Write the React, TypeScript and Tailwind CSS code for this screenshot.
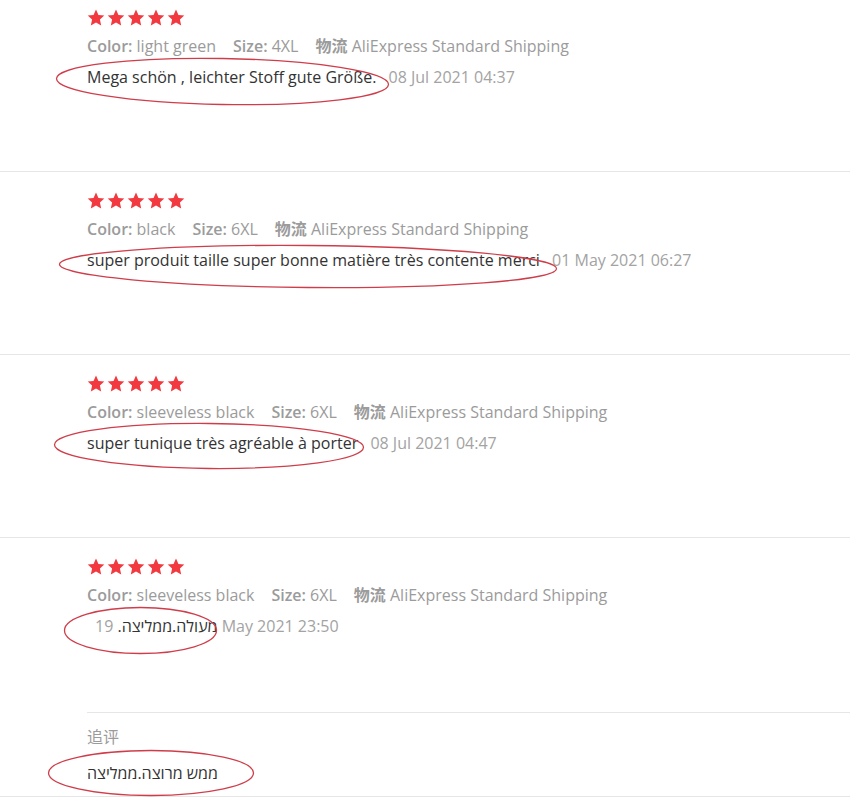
import React from 'react';

type Review = {
  color: string;
  size: string;
  comment: string;
  date: string;
  ring: { left: number; top: number; width: number; height: number; tilt: number };
};

const reviews: Review[] = [
  {
    color: 'light green',
    size: '4XL',
    comment: 'Mega schön , leichter Stoff gute Größe.',
    date: '08 Jul 2021 04:37',
    ring: { left: -32, top: -8, width: 335, height: 49, tilt: 1 },
  },
  {
    color: 'black',
    size: '6XL',
    comment: 'super produit taille super bonne matière très contente merci',
    date: '01 May 2021 06:27',
    ring: { left: -29, top: -4, width: 500, height: 45, tilt: 0.5 },
  },
  {
    color: 'sleeveless black',
    size: '6XL',
    comment: 'super tunique très agréable à porter',
    date: '08 Jul 2021 04:47',
    ring: { left: -34, top: -9, width: 312, height: 48, tilt: 0.5 },
  },
  {
    color: 'sleeveless black',
    size: '6XL',
    comment: 'מעולה.ממליצה.',
    date: '19 May 2021 23:50',
    ring: { left: -24, top: -8, width: 155, height: 49, tilt: 0 },
  },
];

function Stars() {
  return (
    <div className="flex h-[18px] items-center gap-[2px]">
      {[0, 1, 2, 3, 4].map((i) => (
        <svg key={i} width="18" height="17" viewBox="0 0 24 23">
          <path
            d="M12 0.8l3.3 7.3 7.9.8-5.9 5.4 1.7 7.9L12 18.1l-7 4.1 1.7-7.9L.8 8.9l7.9-.8z"
            fill="#f2393f"
          />
        </svg>
      ))}
    </div>
  );
}

// hand-drawn red circle marking the comment
function Ring({ left, top, width, height, tilt }: Review['ring']) {
  return (
    <svg
      className="pointer-events-none absolute"
      style={{ left, top, width, height }}
      viewBox={`0 0 ${width} ${height}`}
    >
      <ellipse
        cx={width / 2}
        cy={height / 2}
        rx={width / 2 - 1.5}
        ry={height / 2 - 1.5}
        fill="none"
        stroke="#cf3d4a"
        strokeWidth="1.3"
        transform={`rotate(${tilt} ${width / 2} ${height / 2})`}
      />
    </svg>
  );
}

function Meta({ color, size }: { color: string; size: string }) {
  return (
    <div className="mt-[8px] flex h-[24px] items-center gap-[17px] text-[16px] text-[#9b9b9b]">
      <span>
        <span className="font-semibold">Color:</span> {color}
      </span>
      <span>
        <span className="font-semibold">Size:</span> {size}
      </span>
      <span>
        <span className="font-semibold">物流</span> AliExpress Standard Shipping
      </span>
    </div>
  );
}

export default function App() {
  return (
    <div
      className="h-[800px] w-[850px] overflow-hidden bg-white"
      style={{ fontFamily: '"Open Sans", "Noto Sans CJK SC", sans-serif' }}
    >
      {reviews.map((r, i) => {
        const last = i === reviews.length - 1;
        return (
          <div
            key={i}
            className={`${i === 0 ? 'pt-[8px]' : 'pt-[19px]'} ${last ? '' : 'border-b border-[#e6e6e6] pb-[82px]'}`}
          >
            <div className="pl-[87px]">
              <Stars />
              <Meta color={r.color} size={r.size} />
              <div className="relative mt-[7px]">
                <p className="h-[24px] text-[16px] leading-[24px] text-[#333]">
                  {r.comment} <span className="ml-2 text-[#a3a3a3]">{r.date}</span>
                </p>
                <Ring {...r.ring} />
              </div>
            </div>
            {last && (
              <div className="mt-[74px] border-b border-[#e6e6e6] pb-[11px]">
                <div className="ml-[87px] border-t border-[#e6e6e6] pt-[12px]">
                  <div className="h-[24px] text-[16px] leading-[24px] text-[#9b9b9b]">追评</div>
                  <div className="relative mt-[12px]">
                    <p className="h-[24px] text-[16px] leading-[24px] text-[#333]">ממש מרוצה.ממליצה</p>
                    <Ring left={-40} top={-12} width={208} height={48} tilt={0} />
                  </div>
                </div>
              </div>
            )}
          </div>
        );
      })}
    </div>
  );
}
